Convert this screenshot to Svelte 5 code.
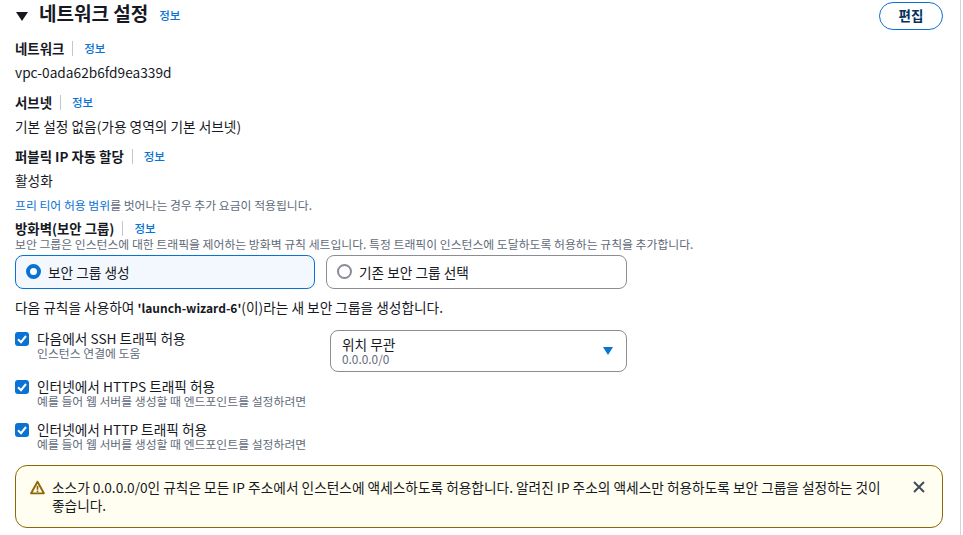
<script lang="ts">
	const rules = [
		{ label: '다음에서 SSH 트래픽 허용', hint: '인스턴스 연결에 도움' },
		{ label: '인터넷에서 HTTPS 트래픽 허용', hint: '예를 들어 웹 서버를 생성할 때 엔드포인트를 설정하려면' },
		{ label: '인터넷에서 HTTP 트래픽 허용', hint: '예를 들어 웹 서버를 생성할 때 엔드포인트를 설정하려면' }
	];
</script>

<div class="page">
	<header class="head">
		<span class="caret"></span>
		<h2>네트워크 설정</h2>
		<a class="info head-info" href="#info">정보</a>
		<button class="edit">편집</button>
	</header>

	<div class="label l1"><b>네트워크</b><i></i><a class="info" href="#info">정보</a></div>
	<div class="value v1">vpc-0ada62b6fd9ea339d</div>

	<div class="label l2"><b>서브넷</b><i></i><a class="info" href="#info">정보</a></div>
	<div class="value v2">기본 설정 없음(가용 영역의 기본 서브넷)</div>

	<div class="label l3"><b>퍼블릭 IP 자동 할당</b><i></i><a class="info" href="#info">정보</a></div>
	<div class="value v3">활성화</div>
	<p class="tier"><a href="#tier">프리 티어 허용 범위</a>를 벗어나는 경우 추가 요금이 적용됩니다.</p>

	<div class="label l4"><b>방화벽(보안 그룹)</b><i></i><a class="info" href="#info">정보</a></div>
	<p class="desc">보안 그룹은 인스턴스에 대한 트래픽을 제어하는 방화벽 규칙 세트입니다. 특정 트래픽이 인스턴스에 도달하도록 허용하는 규칙을 추가합니다.</p>

	<div class="tiles">
		<div class="tile selected"><span class="radio on"></span>보안 그룹 생성</div>
		<div class="tile"><span class="radio"></span>기존 보안 그룹 선택</div>
	</div>

	<p class="rule-intro">다음 규칙을 사용하여 <b>'launch-wizard-6'</b>(이)라는 새 보안 그룹을 생성합니다.</p>

	<div class="rules">
		{#each rules as rule, i}
			<div class="rule" class:first={i === 0}>
				<div class="check-row">
					<span class="check">
						<svg viewBox="0 0 14 14" width="14" height="14"><path d="M3 7.2 6 10.2 11 4" fill="none" stroke="#fff" stroke-width="2"/></svg>
					</span>
					<div class="rule-text">
						<div class="rule-label">{rule.label}</div>
						<div class="hint">{rule.hint}</div>
					</div>
				</div>
				{#if i === 0}
					<div class="select">
						<div>
							<div class="select-main">위치 무관</div>
							<div class="select-sub">0.0.0.0/0</div>
						</div>
						<svg viewBox="0 0 10 8" width="10" height="8"><path d="M0 0H10L5 8Z" fill="#0972d3"/></svg>
					</div>
				{/if}
			</div>
		{/each}
	</div>

	<div class="alert">
		<svg class="warn" viewBox="0 0 16 16" width="15" height="15">
			<path d="M8 1.8 1.2 14.2H14.8Z" fill="none" stroke="#8d6605" stroke-width="2" stroke-linejoin="round"/>
			<path d="M8 6V10.5M8 11.3V13" stroke="#8d6605" stroke-width="1.8" fill="none"/>
		</svg>
		<p>소스가 0.0.0.0/0인 규칙은 모든 IP 주소에서 인스턴스에 액세스하도록 허용합니다. 알려진 IP 주소의 액세스만 허용하도록 보안 그룹을 설정하는 것이 좋습니다.</p>
		<svg class="close" viewBox="0 0 14 14" width="14" height="14">
			<path d="M2 2 12 12M12 2 2 12" stroke="#414d5c" stroke-width="2" fill="none"/>
		</svg>
	</div>
</div>

<style>
	:global(body) {
		margin: 0;
		background: #fff;
		overflow: hidden;
	}

	.page {
		box-sizing: border-box;
		width: 961px;
		height: 535px;
		padding: 0 17px 0 15px;
		border-right: 1px solid #d5d5d5;
		font-family: "Noto Sans CJK KR", "Noto Sans", sans-serif;
		font-size: 13.7px;
		line-height: 16px;
		color: #16191f;
		overflow: hidden;
	}

	p {
		margin: 0;
	}

	a {
		text-decoration: none;
		color: #0972d3;
	}

	.head {
		display: flex;
		align-items: center;
		height: 29px;
		padding-top: 1px;
	}

	.caret {
		width: 0;
		height: 0;
		margin: 2px 11px 0 1px;
		border-left: 6px solid transparent;
		border-right: 6px solid transparent;
		border-top: 9px solid #16191f;
	}

	h2 {
		margin: 0 11px 0 0;
		font-size: 19px;
		font-weight: 700;
		line-height: 24px;
		position: relative;
		top: -3px;
	}

	.info {
		font-size: 11.5px;
		font-weight: 500;
	}

	.head-info {
		position: relative;
		top: -1px;
	}

	.edit {
		box-sizing: border-box;
		width: 64px;
		height: 28px;
		margin-left: auto;
		padding: 0 0 2px;
		border: 1.5px solid #0972d3;
		border-radius: 14px;
		background: #fff;
		color: #033160;
		font: 700 13.5px "Noto Sans CJK KR", sans-serif;
	}

	.label {
		display: flex;
		align-items: center;
		height: 16px;
	}

	.label b {
		font-size: 13.4px;
		line-height: 16px;
		font-weight: 700;
	}

	.label i {
		width: 1px;
		height: 15px;
		margin: 0 11px 0 8px;
		background: #c6c6cd;
	}

	.l1 { margin-top: 10px; }
	.l2 { margin-top: 14px; }
	.l3 { margin-top: 14px; }
	.l4 { margin-top: 7px; }

	.value {
		margin-top: 8px;
		line-height: 16px;
		height: 16px;
	}

	.tier {
		margin-top: 9px;
		height: 16px;
		font-size: 11.85px;
		color: #5f6b7a;
	}

	.desc {
		height: 14px;
		font-size: 11.85px;
		line-height: 14px;
		margin-top: 1px;
		color: #5f6b7a;
	}

	.tiles {
		display: grid;
		grid-template-columns: 300px 301px;
		gap: 11px;
		margin-top: 4px;
	}

	.tile {
		box-sizing: border-box;
		display: flex;
		align-items: center;
		gap: 7px;
		height: 34px;
		padding: 0 10px 1px;
		border: 1px solid #8c8c94;
		border-radius: 8px;
	}

	.tile.selected {
		border-color: #0972d3;
		background: #f2f8fd;
	}

	.radio {
		box-sizing: border-box;
		width: 15px;
		height: 15px;
		border: 2px solid #8c8c94;
		border-radius: 50%;
		background: #fff;
	}

	.radio.on {
		border: 4.5px solid #0972d3;
	}

	.rule-intro {
		margin-top: 10px;
		height: 16px;
	}

	.rule-intro b {
		font-size: 12px;
	}

	.rules {
		display: flex;
		flex-direction: column;
		margin-top: 16px;
		gap: 11px;
	}

	.rule {
		display: flex;
		height: 32px;
	}

	.rule.first {
		height: 37px;
	}

	.check-row {
		display: flex;
		gap: 8px;
		width: 315px;
	}

	.check {
		display: flex;
		box-sizing: border-box;
		width: 14px;
		height: 14px;
		margin-top: 1px;
		border-radius: 3px;
		background: #0972d3;
	}

	.rule-text {
		margin-top: -1px;
	}

	.hint {
		font-size: 11.85px;
		line-height: 14px;
		color: #5f6b7a;
	}

	.select {
		box-sizing: border-box;
		display: flex;
		align-items: center;
		justify-content: space-between;
		width: 297px;
		height: 42px;
		margin-top: -1px;
		padding: 0 13px 0 11px;
		border: 1px solid #8c8c94;
		border-radius: 8px;
		background: #fff;
	}

	.select-main {
		line-height: 16px;
	}

	.select-sub {
		font-size: 11.85px;
		line-height: 14px;
		color: #5f6b7a;
	}

	.alert {
		box-sizing: border-box;
		display: flex;
		width: 928px;
		height: 63px;
		margin-top: 11px;
		padding: 12px 16px 0 14px;
		border: 1px solid #8d6605;
		border-radius: 12px;
		background: #fffef0;
	}

	.warn {
		flex: none;
		margin: 2px 7px 0 0;
	}

	.alert p {
		flex: 1;
		line-height: 18px;
	}

	.close {
		flex: none;
		margin: 2px 0 0 26px;
	}
</style>
